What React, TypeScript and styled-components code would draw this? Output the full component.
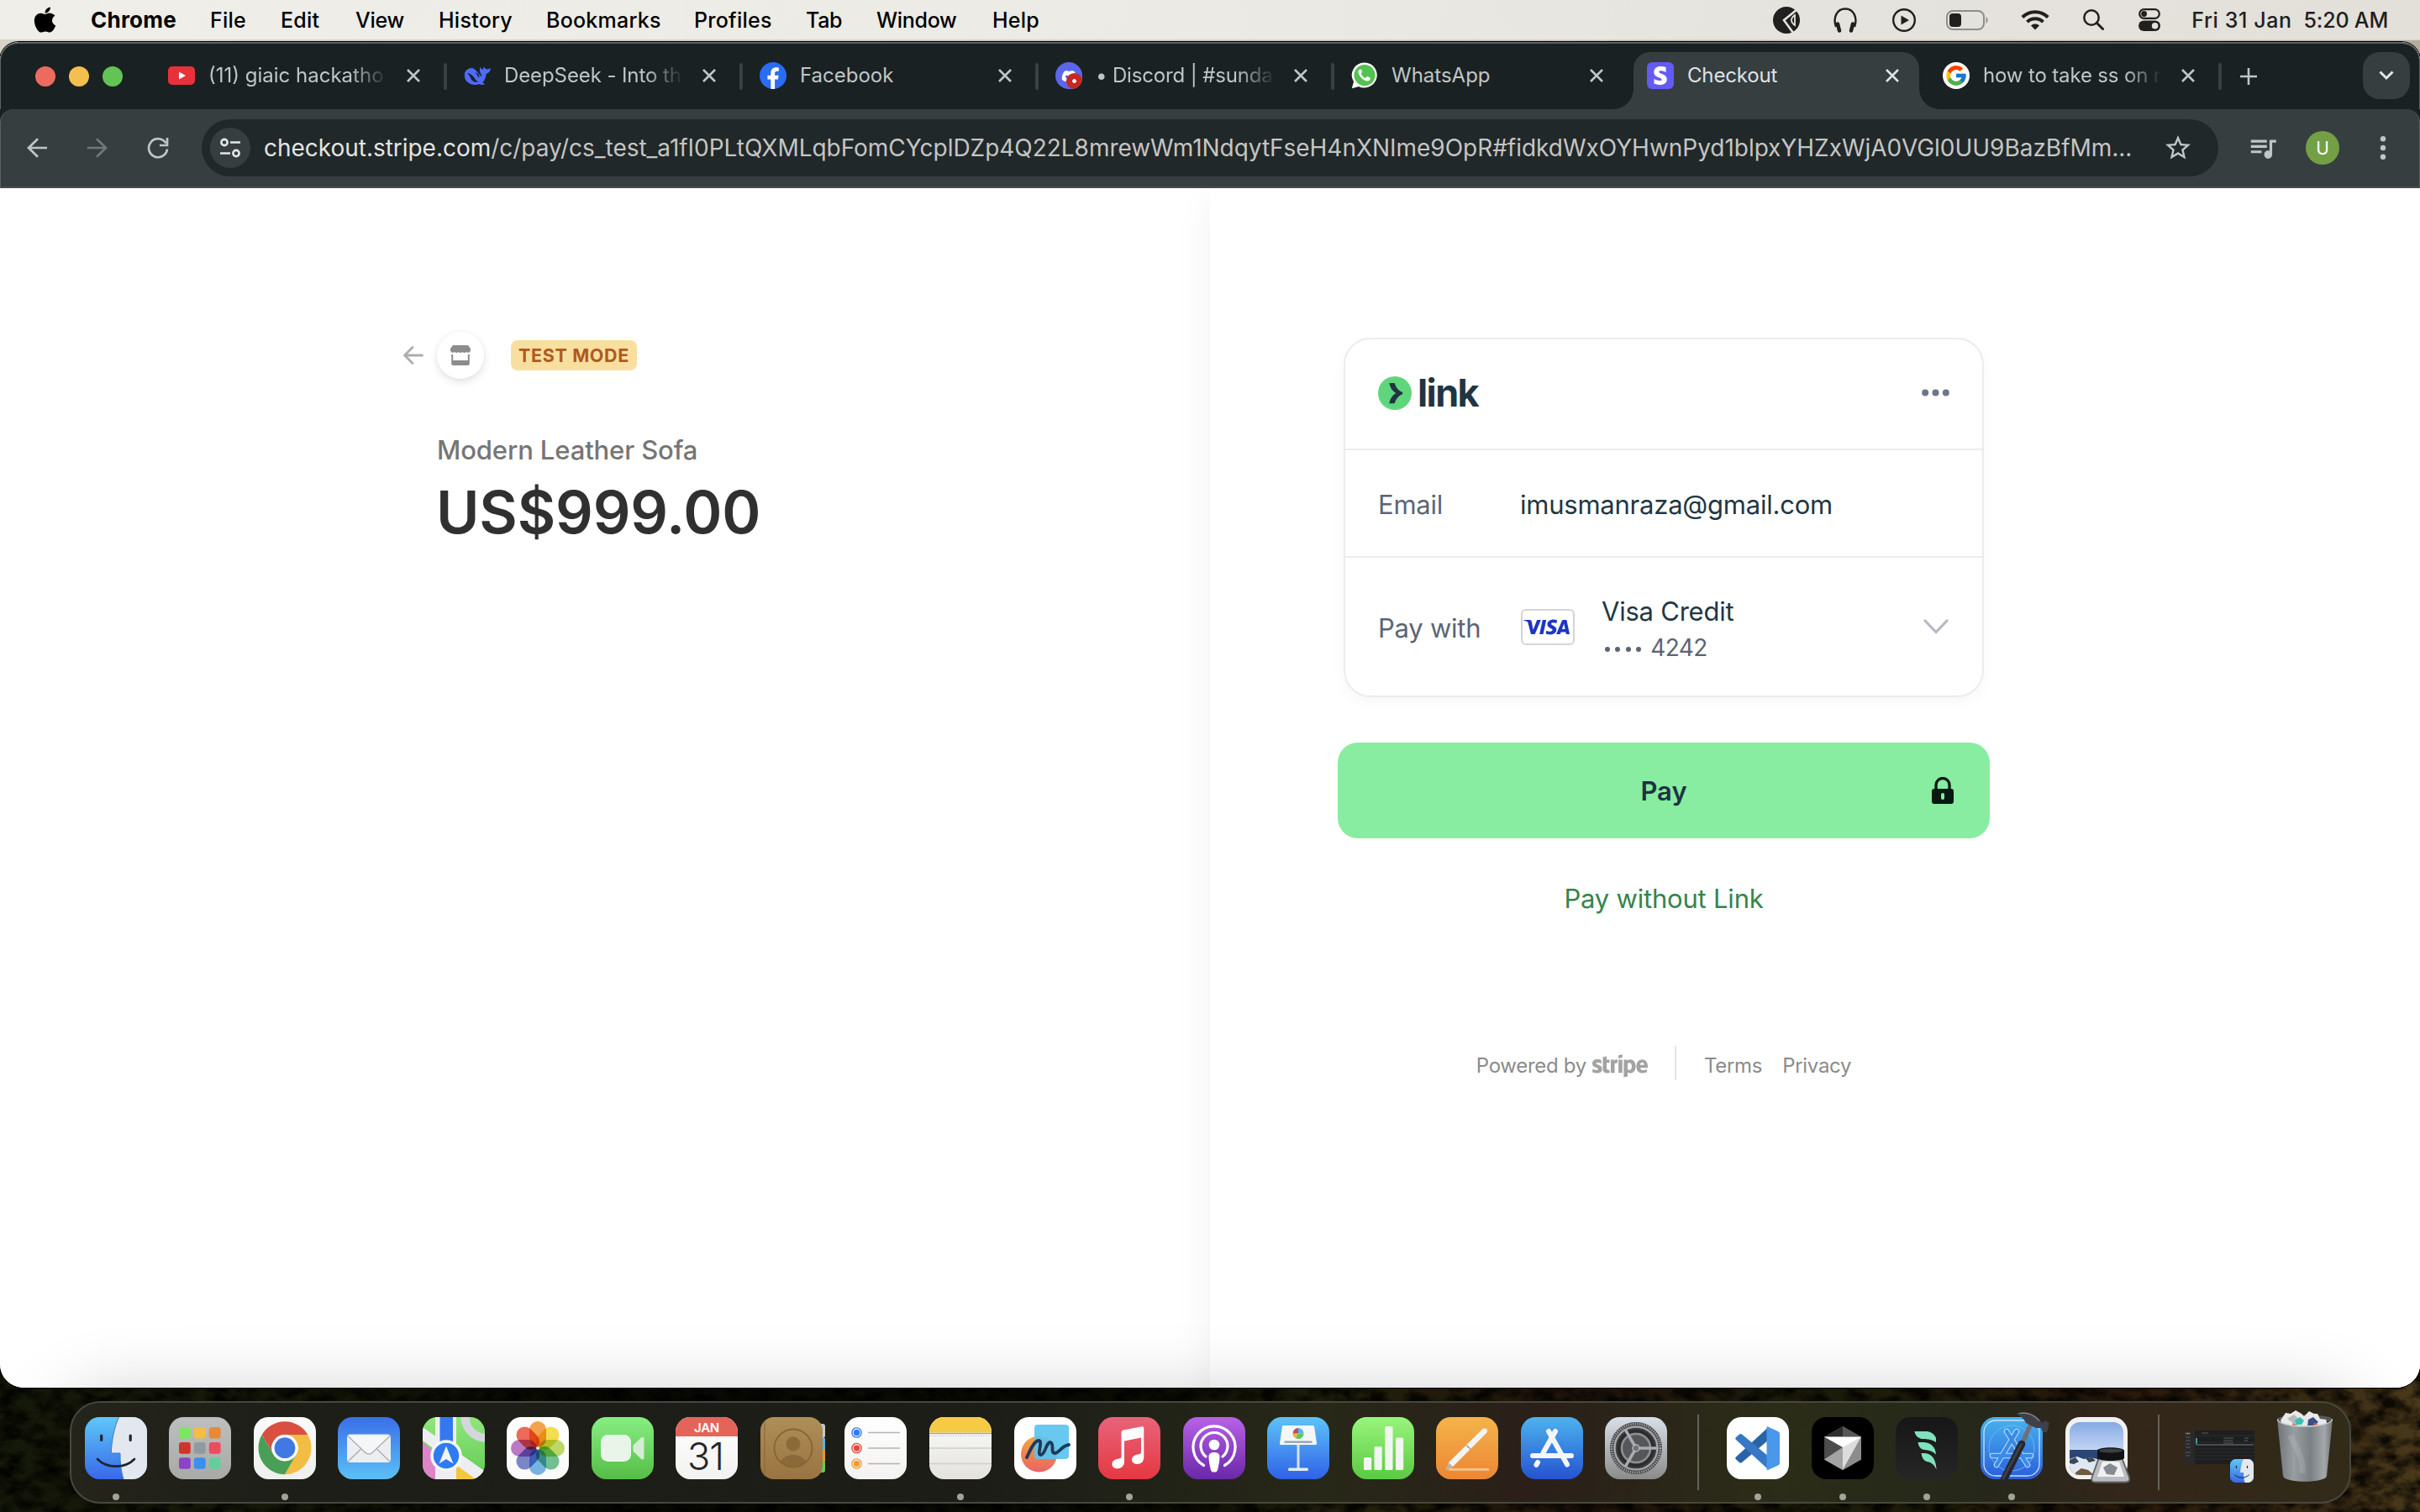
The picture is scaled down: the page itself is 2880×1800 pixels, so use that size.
import React from "react";
import styled, { createGlobalStyle, css } from "styled-components";
import { FaApple, FaDiscord, FaStripe, FaStripeS } from "react-icons/fa6";
import { FcGoogle } from "react-icons/fc";
import { SiVisa } from "react-icons/si";
import { MdQueueMusic, MdStarBorder } from "react-icons/md";

const GlobalStyle = createGlobalStyle`
  * { box-sizing: border-box; }
  body { margin: 0; background: #000; font-family: Inter, "Liberation Sans", sans-serif; }
  svg { display: block; flex: none; }
`;

/* ---------- desktop ---------- */

const Desktop = styled.div`
  position: relative;
  display: flex;
  flex-direction: column;
  width: 2880px;
  height: 1800px;
  overflow: hidden;
  background: linear-gradient(90deg, #d6d4c9, #b4ad9d) 0 0 / 100% 400px no-repeat, #080a04;
`;

const Wallpaper = styled.svg`
  position: absolute;
  left: 0;
  bottom: 0;
`;

/* ---------- menu bar ---------- */

const MenuBar = styled.header`
  position: relative;
  display: flex;
  justify-content: space-between;
  align-items: center;
  height: 48px;
  padding: 0 38px 0 38px;
  background: linear-gradient(90deg, #efeee9, #ebeae4 50%, #e5e3dd 75%, #e3e0da);
  border-bottom: 1px solid #d4d2ca;
  color: #000;
`;

const MenuGroup = styled.nav`
  display: grid;
  grid-template-columns: 70px 142px 84px 89px 99px 128px 176px 133px 84px 138px auto;
  align-items: center;
`;

const MenuItem = styled.span<{ $bold?: boolean; $tight?: boolean }>`
  font-size: ${(p) => (p.$bold ? 26 : 25)}px;
  font-weight: ${(p) => (p.$bold ? 700 : 450)};
  letter-spacing: ${(p) => (p.$tight ? -0.3 : 0.25)}px;
  line-height: 46px;
  white-space: nowrap;
`;

const StatusGroup = styled.div`
  display: flex;
  align-items: center;
  color: #21201e;
`;

const StatusIcon = styled.div<{ $w: number; $gap: number }>`
  display: flex;
  width: ${(p) => p.$w}px;
  margin-right: ${(p) => p.$gap}px;
`;

const Clock = styled.span`
  display: flex;
  gap: 14px;
  font-size: 25px;
  font-weight: 450;
  letter-spacing: 0.6px;
  line-height: 46px;
  white-space: nowrap;
`;

const ClockTime = styled.span`
  letter-spacing: -0.2px;
`;

/* ---------- browser window ---------- */

const BrowserWindow = styled.main`
  position: relative;
  display: flex;
  flex-direction: column;
  height: 1602px;
  margin-top: 2px;
  border-radius: 22px 22px 28px 28px;
  overflow: hidden;
  background: #fff;
  box-shadow: 0 0 0 1px #000;
`;

const TabStrip = styled.div`
  display: flex;
  height: 80px;
  padding-left: 41px;
  background: #1a2122;
  border: solid #5a6265;
  border-width: 2px 1px 0;
  border-radius: 22px 22px 0 0;
`;

const TrafficLights = styled.div`
  display: flex;
  align-items: center;
  gap: 16px;
  width: 136px;
`;

const Light = styled.i<{ $color: string }>`
  width: 24px;
  height: 24px;
  border-radius: 50%;
  background: ${(p) => p.$color};
`;

const TabSlot = styled.div<{ $divider?: boolean }>`
  position: relative;
  display: flex;
  align-items: flex-end;
  width: 352px;
  padding: 0 6px;
  ${(p) =>
    p.$divider &&
    css`
      &::after {
        content: "";
        position: absolute;
        right: -2px;
        top: 23px;
        width: 4px;
        height: 32px;
        border-radius: 2px;
        background: #394143;
      }
    `}
`;

const TabBody = styled.div<{ $active?: boolean }>`
  position: relative;
  display: flex;
  align-items: center;
  width: 340px;
  height: 68px;
  padding: 0 0 12px 16px;
  color: ${(p) => (p.$active ? "#dfe2e2" : "#c0c6c7")};
  ${(p) =>
    p.$active &&
    css`
      background: #363e40;
      border-radius: 20px 20px 0 0;
      &::before,
      &::after {
        content: "";
        position: absolute;
        bottom: 0;
        width: 24px;
        height: 24px;
      }
      &::before {
        left: -24px;
        background: radial-gradient(circle at 0 0, transparent 23.5px, #363e40 24px);
      }
      &::after {
        right: -24px;
        background: radial-gradient(circle at 100% 0, transparent 23.5px, #363e40 24px);
      }
    `}
`;

const Favicon = styled.div<{ $bg?: string; $radius?: string }>`
  position: relative;
  display: flex;
  flex: none;
  align-items: center;
  justify-content: center;
  width: 32px;
  height: 32px;
  border-radius: ${(p) => p.$radius || "0"};
  background: ${(p) => p.$bg || "transparent"};
  overflow: hidden;
  color: #fff;
`;

const FaviconAlert = styled.i`
  position: absolute;
  right: 0;
  bottom: 0;
  width: 19px;
  height: 19px;
  border-radius: 50%;
  background: radial-gradient(circle, #fff 2px, #c8281f 2.8px);
`;

const TabTitle = styled.span<{ $fade?: boolean; $ls?: number }>`
  width: 210px;
  margin-left: 16px;
  overflow: hidden;
  white-space: nowrap;
  font-size: 24px;
  line-height: 34px;
  letter-spacing: ${(p) => p.$ls || 0}px;
  ${(p) =>
    p.$fade &&
    css`
      mask-image: linear-gradient(90deg, #000 168px, transparent 214px);
    `}
`;

const TabClose = styled.div`
  margin-left: 25px;
`;

const NewTab = styled.div`
  display: flex;
  align-items: center;
  width: 170px;
  padding-left: 23px;
`;

const TabSearch = styled.div`
  display: flex;
  align-items: center;
  justify-content: center;
  width: 56px;
  height: 56px;
  margin-top: 10px;
  border-radius: 20px;
  background: #363e40;
`;

const ToolbarBack = styled.div`
  background: #1a2122;
`;

const Toolbar = styled.div`
  display: flex;
  align-items: center;
  height: 94px;
  padding-left: 31px;
  border: solid #5a6265;
  border-width: 0 1px;
  border-bottom: 2px solid #484a48;
  border-radius: 16px 16px 0 0;
  background: #363e40;
`;

const ToolbarIcon = styled.div<{ $w: number; $gap: number }>`
  display: flex;
  align-items: center;
  justify-content: center;
  width: ${(p) => p.$w}px;
  margin-right: ${(p) => p.$gap}px;
  color: #c0c6c7;
`;

const Omnibox = styled.div`
  display: flex;
  align-items: center;
  width: 2400px;
  height: 68px;
  margin-right: 36px;
  padding-left: 10px;
  border-radius: 34px;
  background: #212829;
`;

const SiteChip = styled.div`
  display: flex;
  align-items: center;
  justify-content: center;
  width: 48px;
  height: 48px;
  border-radius: 50%;
  background: #363e40;
`;

const Url = styled.span`
  width: 2247px;
  margin-left: 16px;
  font-size: 28px;
  line-height: 40px;
  letter-spacing: -0.03px;
  white-space: nowrap;
  color: #c5c5c4;
`;

const UrlHost = styled.span`
  color: #e4e4e3;
`;

const Avatar = styled.div`
  display: flex;
  align-items: center;
  justify-content: center;
  width: 40px;
  height: 40px;
  margin-right: 48px;
  border-radius: 50%;
  background: #739f45;
  color: #fff;
  font-size: 21px;
`;

/* ---------- checkout page ---------- */

const Page = styled.div`
  display: flex;
  flex: 1;
  background: #fff;
`;

const SummaryPane = styled.section`
  width: 1440px;
  padding: 171px 0 0 480px;
`;

const PaymentPane = styled.section`
  display: flex;
  flex-direction: column;
  width: 1440px;
  padding: 178px 512px 0 152px;
  background: #fff;
  box-shadow: -2px 14px 40px 0 rgba(0, 0, 0, 0.055);
  clip-path: inset(0 0 0 -60px);
`;

const MerchantRow = styled.div`
  display: flex;
  align-items: center;
  height: 56px;
`;

const StoreBadge = styled.div`
  display: flex;
  align-items: center;
  justify-content: center;
  width: 56px;
  height: 56px;
  margin: 0 32px 0 16px;
  border-radius: 50%;
  background: #fff;
  box-shadow: 0 4px 10px rgba(60, 66, 87, 0.14), 0 0 6px rgba(0, 0, 0, 0.03);
`;

const TestMode = styled.span`
  padding: 0 9px;
  border-radius: 8px;
  background: #f9df9f;
  color: #ae5a20;
  font-size: 21.5px;
  font-weight: 650;
  line-height: 36px;
  letter-spacing: 0.65px;
`;

const ProductName = styled.h2`
  margin: 65px 0 0 40px;
  font-size: 31px;
  font-weight: 500;
  line-height: 40px;
  letter-spacing: -0.12px;
  color: #757575;
`;

const Price = styled.h1`
  margin: 12px 0 0 39px;
  font-size: 70px;
  font-weight: 570;
  line-height: 84px;
  letter-spacing: -0.15px;
  color: #303030;
`;

const LinkCard = styled.div`
  margin: 0 7px;
  border: 2px solid #ececee;
  border-radius: 32px;
  box-shadow: 0 6px 16px rgba(0, 0, 0, 0.035);
`;

const CardRow = styled.div<{ $h: number; $shift?: number; $lift?: number }>`
  display: flex;
  align-items: center;
  height: ${(p) => p.$h}px;
  padding: ${(p) => p.$shift || 0}px 39px ${(p) => p.$lift || 0}px;
  & + & {
    border-top: 2px solid #ebecef;
  }
`;

const LinkWordmark = styled.span`
  flex: 1;
  margin-left: 7px;
  font-size: 45px;
  font-weight: 660;
  line-height: 50px;
  letter-spacing: -1.6px;
  color: #1f3544;
`;

const RowLabel = styled.span`
  width: 169px;
  font-size: 31px;
  line-height: 42px;
  letter-spacing: -0.25px;
  color: #5c6474;
`;

const RowValue = styled.span`
  font-size: 31px;
  line-height: 42px;
  letter-spacing: -0.23px;
  color: #223642;
`;

const VisaCard = styled.div`
  display: flex;
  align-items: center;
  justify-content: flex-start;
  width: 64px;
  height: 43px;
  margin: 0 32px 3px 1px;
  padding-left: 1px;
  border: 2px solid #d3d4d8;
  border-radius: 6px;
  color: #1f35c4;
`;

const CardDetails = styled.div`
  display: flex;
  flex: 1;
  flex-direction: column;
  padding-top: 4px;
`;

const CardNumber = styled.span`
  display: flex;
  align-items: center;
  gap: 11px;
  padding-left: 4px;
  font-size: 28px;
  line-height: 44px;
  letter-spacing: -0.6px;
  color: #5c6474;
`;

const MaskDots = styled.span`
  display: flex;
  gap: 6.4px;
  padding-top: 3px;
`;

const MaskDot = styled.i`
  width: 6px;
  height: 6px;
  border-radius: 50%;
  background: #5c6474;
`;

const ChevronSlot = styled.span`
  padding-bottom: 5px;
`;

const PayButton = styled.button`
  display: grid;
  grid-template-columns: 1fr auto 1fr;
  align-items: center;
  height: 114px;
  margin-top: 54px;
  padding: 0 43px;
  border: 0;
  border-radius: 24px;
  background: #88eda1;
  color: #1e3344;
  font: 600 31px / 42px Inter, sans-serif;
`;

const PayLabel = styled.span`
  grid-column: 2;
  padding-top: 2px;
`;

const LockSlot = styled.span`
  justify-self: end;
`;

const AltLink = styled.a`
  align-self: center;
  margin-top: 52px;
  font-size: 31px;
  line-height: 40px;
  letter-spacing: -0.2px;
  color: #35844b;
`;

const Footer = styled.footer`
  display: flex;
  align-items: center;
  align-self: center;
  height: 41px;
  margin-top: 155px;
  font-size: 24px;
  line-height: 30px;
  letter-spacing: -0.3px;
  color: #8b8b8b;
`;

const FooterBrand = styled.span`
  display: flex;
  align-items: center;
  gap: 7px;
  height: 41px;
  margin-right: 33px;
  padding: 6px 32px 0 0;
  border-right: 2px solid #e4e4e4;
`;

const FooterLink = styled.a`
  padding-top: 6px;
  & + & {
    margin-left: 24px;
  }
`;

/* ---------- dock ---------- */

const DockArea = styled.div`
  position: relative;
  display: flex;
  justify-content: center;
  padding-top: 16px;
`;

const Dock = styled.div`
  display: flex;
  width: 2715px;
  height: 122px;
  padding: 0 0 0 16px;
  border: 2px solid #46483e;
  border-radius: 36px;
  background: linear-gradient(90deg, #24241a, #1d1e18 10%, #1c1d17 40%, #272818 55%, #2a1f19 64%, #2b2d18 75%, #25271a 84%, #33261a 90%, #312b18);
  box-shadow: 0 0 90px rgba(0, 0, 0, 0.24);
`;

const DockItem = styled.div<{ $w?: number; $gap?: number; $top?: number; $running?: boolean }>`
  position: relative;
  width: ${(p) => p.$w || 74}px;
  height: 118px;
  padding-top: ${(p) => (p.$top === undefined ? 17 : p.$top)}px;
  margin-right: ${(p) => (p.$gap === undefined ? 26.55 : p.$gap)}px;
  ${(p) =>
    p.$running &&
    css`
      &::after {
        content: "";
        position: absolute;
        left: 33px;
        bottom: 2px;
        width: 8px;
        height: 8px;
        border-radius: 50%;
        background: #a3a497;
      }
    `}
`;

const DockDivider = styled.i<{ $gap: number }>`
  width: 2px;
  height: 90px;
  margin: 14px ${(p) => p.$gap}px 0 0;
  background: #63645a;
`;

/* ---------- small drawings ---------- */

const CloseGlyph = () => (
  <svg width="18" height="18" viewBox="0 0 18 18" stroke="currentColor" strokeWidth="2.6">
    <path d="M2 2l14 14M16 2L2 16" />
  </svg>
);

const DeepSeekGlyph = () => (
  <svg width="32" height="32" viewBox="0 0 32 32">
    <path
      fill="#4f6bfe"
      d="M.8 16C.8 10.500 4 7.500 9.500 7c1.800.4 3 1 4.200 2.200l3.200 3.200 3 3.600c1 1.400 1.600 1 1.300-.2l-1.900-3.800c-.6-1.700-.5-4 .5-6.500.5 1.800 1.400 2.900 2.800 3.600.2-1.500.6-2.700 1.400-3.700.9 1.900 2.100 2.800 4 3 1.400-.1 2.500-.6 3.600-1.500.3 3.600-1.500 6.200-5 6.900-.4 4.400-1.700 7.700-4.200 10.500.8.8 1.700 1.300 2.800 1.700-2.400 1.300-4.400 1.200-6.500 0C11 28.800.8 25 .8 16z"
    />
    <path fill="#1a2122" d="M4 12.800c3.800.6 7.200 3.400 9.200 7 .9 1.800 2.300 3 4 3.600-3.600 1.400-7-.6-8.600-3.700C7.400 17 6 14.800 4 12.800z" />
    <path fill="#1a2122" d="M13.500 12.600c2.600 0 4.600 1.700 5.100 4.400l-1.300 1.400c-.4-2.200-1.700-4.200-3.800-5.800z" />
  </svg>
);

const WhatsAppGlyph = () => (
  <svg width="32" height="32" viewBox="0 0 32 32">
    <path fill="#fff" d="M16 .5a15 15 0 1 1-7 28.400L.8 31.200 3 23.300A15 15 0 0 1 16 .5z" />
    <circle cx="16" cy="15.600" r="12.600" fill="#56c153" />
    <path
      fill="#fff"
      d="M11.300 8.500c-.5-.1-1.200 0-1.700.6-2.300 2.600-.7 6 2.300 9.300 3.300 3.600 7.600 5.200 9.800 3.400 1.300-1.100 1.300-2.500 1-2.900-.4-.5-2.900-1.700-3.600-1.800-.6 0-1.300 1.700-2 1.800-.9.100-4.600-3-5.300-5-.2-.8 1.300-1.500 1.300-2.300 0-.7-1-2.900-1.800-3.100z"
    />
  </svg>
);

const tabs = [
  {
    title: "(11) giaic hackathon",
    fade: true,
    divider: true,
    ls: 0,
    icon: (
      <Favicon>
        <svg width="32" height="22" viewBox="0 0 32 22">
          <rect width="32" height="22" rx="5" fill="#e8313d" />
          <path d="M13 6.500l8 4.500-8 4.500z" fill="#fff" />
        </svg>
      </Favicon>
    ),
  },
  { title: "DeepSeek - Into the U", fade: true, divider: true, ls: -0.1, icon: <Favicon><DeepSeekGlyph /></Favicon> },
  {
    title: "Facebook",
    divider: true,
    ls: 0,
    icon: (
      <Favicon $bg="#2a6cf4" $radius="50%">
        <svg width="32" height="32" viewBox="0 0 32 32">
          <path fill="#fff" d="M13.300 32V20.500H9.400v-4.700h3.900v-2.400c0-5 2.500-7.100 6.600-7.100 1.300 0 2.100.1 2.900.3v4.200h-2c-2 0-2.700.9-2.700 2.900v2.100h4.600l-.9 4.700h-3.700V32z" />
        </svg>
      </Favicon>
    ),
  },
  {
    title: "• Discord | #sunday",
    fade: true,
    divider: true,
    ls: -0.15,
    icon: (
      <Favicon $bg="#5b66ea" $radius="50% 50% 40% 50%">
        <FaDiscord size={19} />
        <FaviconAlert />
      </Favicon>
    ),
  },
  { title: "WhatsApp", ls: 0, icon: <Favicon><WhatsAppGlyph /></Favicon> },
  {
    title: "Checkout",
    active: true,
    ls: -0.16,
    icon: <Favicon $bg="#635bf4" $radius="6px"><FaStripeS size={22} /></Favicon>,
  },
  {
    title: "how to take ss on mac",
    fade: true,
    divider: true,
    ls: -0.15,
    icon: <Favicon $bg="#fff" $radius="50%"><FcGoogle size={28} /></Favicon>,
  },
];

/* ---------- dock icons, each on a 74 x 74 tile ---------- */

type TileProps = { id: string; from: string; to: string; children?: React.ReactNode };

const Tile = ({ id, from, to, children }: TileProps) => (
  <svg width="74" height="74" viewBox="0 0 74 74">
    <defs>
      <linearGradient id={id} x2="0" y2="1">
        <stop stopColor={from} />
        <stop offset="1" stopColor={to} />
      </linearGradient>
      <clipPath id={id + "-clip"}>
        <rect width="74" height="74" rx="17.500" />
      </clipPath>
    </defs>
    <g clipPath={`url(#${id}-clip)`}>
      <rect width="74" height="74" fill={`url(#${id})`} />
      {children}
    </g>
  </svg>
);

const FinderFace = ({ id }: { id: string }) => (
  <Tile id={id} from="#5ec8f8" to="#3868ea">
    <path d="M40.500 0C35 12 32 27 31.200 43H42c-.3 11 1 22 4 31h28V0z" fill="#e3e8f0" />
    <path d="M40.500 0C35 12 32 27 31.200 43H42c-.3 11 1 22 4 31" fill="none" stroke="#3a78c8" strokeWidth="1" />
    <path d="M19.700 22v5.500M54.200 22v5.500" stroke="#1c2530" strokeWidth="3.200" strokeLinecap="round" />
    <path d="M15 50c11 11.500 33 11.500 44 0" fill="none" stroke="#1c2530" strokeWidth="2.600" strokeLinecap="round" />
  </Tile>
);

const launchColors = ["#7ae85e", "#f5bd45", "#e88a33", "#cf3527", "#909a9f", "#ef4b5e", "#8b43c9", "#3a90ef", "#62cf9c"];

const Launchpad = () => (
  <Tile id="launchpad" from="#bdbfbf" to="#a8aaa8">
    {launchColors.map((c, i) => (
      <rect key={c} x={12 + (i % 3) * 17.9} y={12 + Math.floor(i / 3) * 18.1} width="13.800" height="13.600" rx="3" fill={c} />
    ))}
  </Tile>
);

const ChromeIcon = () => (
  <Tile id="chrome" from="#fafafa" to="#efefed">
    <g transform="translate(37 36.700)">
      <path d="M-27.300-15.700A31.500 31.500 0 0 1 27.300-15.700L0-15.700A15.700 15.700 0 0 0-13.600 7.850Z" fill="#d95040" />
      <path d="M27.300-15.700A31.500 31.500 0 0 1 0 31.500L13.600 7.850A15.700 15.700 0 0 0 0-15.700Z" fill="#f2bd42" />
      <path d="M0 31.500A31.500 31.500 0 0 1-27.300-15.700L-13.600 7.850A15.700 15.700 0 0 0 13.600 7.850Z" fill="#4a9f57" />
      <circle r="15.600" fill="#fff" />
      <circle r="12.400" fill="#4079e2" />
    </g>
  </Tile>
);

const MailIcon = () => (
  <Tile id="mail" from="#3a6fe9" to="#5cc0f6">
    <rect x="11" y="20.500" width="52" height="33.500" rx="4" fill="#eceef0" />
    <path d="M12.500 52.500L27.500 38M61.500 52.500L46.500 38" stroke="#a9adb2" strokeWidth="1.300" />
    <path d="M12 22.500L32.500 42c2.800 2.600 6.200 2.600 9 0L62 22.500" fill="#f6f6f6" stroke="#a9adb2" strokeWidth="1.300" />
  </Tile>
);

const MapsIcon = () => (
  <Tile id="maps" from="#90e67c" to="#62cb55">
    <path d="M-2 28L26 52V76H-2z" fill="#dd84c8" />
    <path d="M40 76V52L76 80z" fill="#f3c73f" />
    <path d="M0 12L76 66V76H66L0 28z" fill="#eeeef2" />
    <rect x="15" y="-2" width="25" height="78" fill="#eeeef2" />
    <rect x="20.500" y="-2" width="15.500" height="40" fill="#3478f0" />
    <path d="M50-4c0 17 10 29 28 29" fill="none" stroke="#d5d6dc" strokeWidth="10" />
    <circle cx="28" cy="46" r="18.800" fill="#f4f6fa" />
    <circle cx="28" cy="46" r="15.200" fill="#2f7bf2" />
    <path d="M28 34.500L36.500 55.500 28 50 19.500 55.500z" fill="#f3f3f3" />
  </Tile>
);

const petals = ["#f39a38", "#f2dc3c", "#b6d757", "#62bd88", "#68aee4", "#6f7bc5", "#b56dc0", "#ee5a48"];

const Petal = styled.rect`
  mix-blend-mode: multiply;
`;

const PhotosIcon = () => (
  <Tile id="photos" from="#ffffff" to="#fafafa">
    <g transform="translate(37 37)">
      {petals.map((c, i) => (
        <Petal
          key={c}
          x="-10"
          y="-32"
          width="20"
          height="31"
          rx="10"
          fill={c}
          opacity="0.9"
          transform={`rotate(${i * 45})`}
        />
      ))}
      <circle r="1.800" fill="#fff" />
    </g>
  </Tile>
);

const FaceTimeIcon = () => (
  <Tile id="facetime" from="#87ee82" to="#55bd46">
    <rect x="11" y="21" width="36" height="32" rx="8.500" fill="#eaf5ea" />
    <path d="M49.500 33.500L59 24.500c1.500-1.300 3.500-.8 3.500 1.300v22.600c0 2.100-2 2.600-3.500 1.300l-9.500-9z" fill="#d3eed3" />
  </Tile>
);

const CalendarIcon = () => (
  <Tile id="calendar" from="#ffffff" to="#f2f2f1">
    <rect width="74" height="23" fill="#e4645a" />
    <text x="37" y="18" textAnchor="middle" fontFamily="Inter" fontWeight="600" fontSize="15" letterSpacing="-0.300" fill="#fff">JAN</text>
    <text x="35.500" y="63" textAnchor="middle" fontFamily="Inter" fontWeight="300" fontSize="45" letterSpacing="-1" fill="#252525">31</text>
  </Tile>
);

const ContactsIcon = () => (
  <svg width="78" height="74" viewBox="0 0 78 74">
    <rect x="58" y="8" width="19" height="17" rx="3" fill="#c8c8c8" />
    <rect x="58" y="25" width="19" height="15" fill="#5ab4ea" />
    <rect x="58" y="39" width="19" height="14" fill="#ee9434" />
    <rect x="58" y="52" width="19" height="14" rx="3" fill="#62ce58" />
    <defs>
      <linearGradient id="leather" x2="0" y2="1">
        <stop stopColor="#ae8f58" />
        <stop offset="1" stopColor="#9a7341" />
      </linearGradient>
      <clipPath id="contact-clip"><circle cx="39" cy="37" r="22.500" /></clipPath>
    </defs>
    <rect width="74" height="74" rx="16" fill="url(#leather)" />
    <path d="M5 4v66" stroke="#8a6b3c" strokeWidth="1.200" />
    <g clipPath="url(#contact-clip)" fill="#8b6939">
      <circle cx="39" cy="32" r="8.500" />
      <ellipse cx="39" cy="61" rx="18" ry="16" />
    </g>
    <circle cx="39" cy="37" r="22.500" fill="none" stroke="#866534" strokeWidth="1.800" />
  </svg>
);

const RemindersIcon = () => (
  <Tile id="reminders" from="#ffffff" to="#f3f2f0">
    {["#3478f6", "#e5493a", "#ee9b33"].map((c, i) => (
      <g key={c} transform={`translate(0 ${18.5 + i * 18.5})`}>
        <circle cx="14.500" r="5.600" fill="none" stroke={c} strokeWidth="1.400" />
        <circle cx="14.500" r="3.800" fill={c} />
        <path d="M28 0h38" stroke="#b4b4b7" strokeWidth="1.400" />
      </g>
    ))}
  </Tile>
);

const NotesIcon = () => (
  <Tile id="notes" from="#fcfcfc" to="#e3e2dd">
    <rect width="74" height="18.500" fill="#f6ca45" />
    <path d="M0 19.500h74" stroke="#aaa7a0" strokeWidth="1.500" />
    <path d="M1 22.500h72" stroke="#bdbab3" strokeWidth="1.200" strokeDasharray="1.200 1.800" />
    <path d="M0 37h74M0 55.500h74" stroke="#cfcec9" strokeWidth="1.400" />
  </Tile>
);

const FreeformIcon = () => (
  <Tile id="freeform" from="#ffffff" to="#ffffff">
    <defs>
      <linearGradient id="blob" x2="0" y2="1">
        <stop stopColor="#f2a63d" />
        <stop offset="1" stopColor="#ea6464" />
      </linearGradient>
    </defs>
    <circle cx="29.500" cy="44" r="21.500" fill="url(#blob)" />
    <rect x="24" y="9" width="41" height="41" rx="4" fill="#5bc4ef" opacity="0.920" />
    <path d="M15 48c4-9 9-20 14-20 6 0-3 18 3 17 5-1 6-15 11-15 5 1 0 13 5 13 6 0 8-9 17-10" fill="none" stroke="#1d3a5c" strokeWidth="3.800" strokeLinecap="round" />
  </Tile>
);

const MusicIcon = () => (
  <Tile id="music" from="#e9637a" to="#e53841">
    <path
      fill="#fff"
      d="M27.500 18.500c0-1.600.8-2.500 2.200-2.900l22-4.300c1.700-.3 2.600.5 2.600 2V48c0 5-3.500 8-8 8-3.800 0-6.300-2.300-6.300-5.200 0-3.300 2.300-5.300 6-6.100l3-.6c1.500-.4 2-1 2-2.300V24.500l-20 4V53c0 5-3.500 8.300-8.200 8.300-3.800 0-6.400-2.300-6.400-5.300s2.400-5.200 6.100-6l3-.7c1.500-.4 2-1 2-2.300z"
    />
  </Tile>
);

const PodcastsIcon = () => (
  <Tile id="podcasts" from="#b762e8" to="#6a28a8">
    <g fill="none" stroke="#fff" strokeLinecap="round">
      <path d="M24.500 57.500a25 25 0 1 1 25 0" strokeWidth="3.200" />
      <path d="M27 47a16 16 0 1 1 20 0" strokeWidth="3.200" />
    </g>
    <circle cx="37" cy="33" r="6.300" fill="#fff" />
    <path d="M30.500 47c0-3.600 2.700-5 6.500-5s6.500 1.400 6.500 5c0 5-1.500 12-2.300 15.500-.6 2.600-2 3-4.200 3s-3.600-.4-4.200-3C32 59 30.500 52 30.500 47z" fill="#fff" />
  </Tile>
);

const KeynoteIcon = () => (
  <Tile id="keynote" from="#5dc3f8" to="#2f62e8">
    <path d="M37 33v29" stroke="#d8e3ee" strokeWidth="3" />
    <rect x="25" y="60.500" width="24" height="3.500" rx="1.500" fill="#e6eaf0" />
    <path d="M20 10h34c1.500 0 2 .6 2.200 2L59 31c.2 1.300-.5 2-2 2H17c-1.500 0-2.200-.7-2-2l2.800-19c.2-1.400.7-2 2.200-2z" fill="#f5f6f7" />
    <path d="M20.500 28.500h33v2.200h-33z" fill="#8ba0b2" />
    <path d="M37 19.500V13a6.500 6.500 0 0 1 6.500 6.500z" fill="#4fb6ec" />
    <path d="M37 19.500h6.500a6.500 6.500 0 0 1-9.800 5.600z" fill="#5ec75a" />
    <path d="M37 19.500l-3.300 5.600a6.500 6.500 0 0 1-3.200-5.600z" fill="#f0b03f" />
    <path d="M37 19.500h-6.500A6.500 6.500 0 0 1 37 13z" fill="#c4466b" />
  </Tile>
);

const NumbersIcon = () => (
  <Tile id="numbers" from="#98f57c" to="#5bc943">
    {[[14, 48], [26.5, 35], [39.3, 11], [52, 24.5]].map(([x, y]) => (
      <rect key={x} x={x} y={y} width="9.200" height={63 - y} rx="1.500" fill="#f1f7ef" />
    ))}
  </Tile>
);

const PagesIcon = () => (
  <Tile id="pages" from="#f4b44a" to="#ec8634">
    <rect x="15" y="61" width="48" height="2.800" rx="1" fill="#f7c48d" />
    <path d="M12 63l3-9L55 14.500c2-1.800 6-1.200 6 1.500 0 1.600-.8 2.700-2 4L20 59z" fill="#f4f4f4" />
    <path d="M12 63l3-9 5 5z" fill="#b9b2a8" />
    <path d="M36 33.500l5 4.500" stroke="#9a9a9a" strokeWidth="1.500" />
  </Tile>
);

const AppStoreIcon = () => (
  <Tile id="appstore" from="#4db3ee" to="#2553d0">
    <g stroke="#f3f7fc" strokeWidth="6" strokeLinecap="round">
      <path d="M14 46h46" />
      <path d="M33 17L55 56.500" />
      <path d="M41 17L26.500 42.500M20 54l-1.600 2.800" />
    </g>
  </Tile>
);

const SettingsIcon = () => (
  <Tile id="settings" from="#d8e0e8" to="#8b8b89">
    <g transform="translate(37 37)" fill="none">
      <circle r="31" fill="#3b3c3d" />
      <circle r="29" stroke="#9ea1a3" strokeWidth="3" strokeDasharray="1.500 1.200" />
      <circle r="25.500" stroke="#a3a6a8" strokeWidth="2.500" />
      <circle r="17" fill="#55575a" stroke="#8e9193" strokeWidth="2.500" />
      <circle r="20.500" stroke="#2b2c2d" strokeWidth="3" />
      <path d="M0 0h25M0 0L-12.500-21.600M0 0L-12.500 21.600" stroke="#a9acae" strokeWidth="3.500" />
      <circle r="4" fill="#707375" stroke="#b5b8ba" strokeWidth="1.500" />
    </g>
  </Tile>
);

const VSCodeIcon = () => (
  <Tile id="vscode" from="#ffffff" to="#ffffff">
    <path d="M50 11.500L11 47.500c-1 1-1 2.200 0 3l4 3.500c1 .8 2 .8 3 0L50 27z" fill="#2a64a8" />
    <path d="M50 63L11 27c-1-1-1-2.200 0-3l4-3.500c1-.8 2-.8 3 0L50 47z" fill="#3778c6" />
    <path d="M49 11.500l12 5.500c1.300.7 2 1.500 2 3v34.500c0 1.500-.7 2.300-2 3L49 63c-1 .4-1.500 0-1.500-1V12.500c0-1 .5-1.400 1.500-1z" fill="#4a98ea" />
  </Tile>
);

const CursorIcon = () => (
  <Tile id="cursor" from="#000000" to="#000000">
    <path d="M37 11L15 23.500V50.500L37 63 59 50.500V23.500z" fill="#6b6b6b" />
    <path d="M37 11L15 23.500h44z" fill="#2e2e2e" />
    <path d="M37 11v12.500h22z" fill="#575757" />
    <path d="M15 23.500V50.500L37 36z" fill="#4c4c4c" />
    <path d="M15 50.500L37 63V36z" fill="#a3a3a3" />
    <path d="M15 23.500h44L37 63V36z" fill="#fff" />
    <path d="M59 23.500L37 63V36z" fill="#dcdcdc" />
    <path d="M59 23.500v27L37 63z" fill="#8c8c8c" />
  </Tile>
);

const LeafIcon = () => (
  <Tile id="leaf" from="#161616" to="#262626">
    <g fill="#7fe3bd">
      <path d="M22.500 17h12c7 0 13 4 13.500 11.500-5-3.500-10-4.300-17-4.500-4.500-.2-7.500-2.500-8.500-7z" />
      <path d="M22.500 17c1 5 4 8.500 9.500 9 6 .4 11 .5 16 4v-5C46 19.500 41 17 34.500 17z" />
      <path d="M26.500 30H33c8 0 14.500 5 15 14.500-4-3.800-8-5-13.500-5.500-4.500-.4-7.300-3.700-8-9z" />
      <path d="M30.500 43H35c7.500.6 13 6.500 13.500 19.500-3-6.500-6.500-8.500-10.500-9.200-4.500-.8-6.800-5-7.500-10.300z" />
    </g>
  </Tile>
);

const XcodeIcon = () => (
  <svg width="84" height="88" viewBox="0 -7 84 88">
    <defs>
      <linearGradient id="xcode" x2="0" y2="1">
        <stop stopColor="#46b4ee" />
        <stop offset="1" stopColor="#2c5ddb" />
      </linearGradient>
    </defs>
    <rect width="74" height="74" rx="17.500" fill="url(#xcode)" />
    <rect x="4" y="4" width="66" height="66" rx="14" fill="none" stroke="#c6e4fb" strokeWidth="1.300" />
    <circle cx="37" cy="37" r="27" fill="none" stroke="#7db9f0" strokeWidth="0.800" />
    <g stroke="#bfe0fb" strokeWidth="6.500" strokeLinecap="round">
      <path d="M14 46h46M31 17L56 57M43 17L19 57" />
    </g>
    <g stroke="#3a8be6" strokeWidth="4.500" strokeLinecap="round">
      <path d="M14 46h46M31 17L56 57M43 17L19 57" />
    </g>
    <path d="M60 8L49 33" stroke="#6d7078" strokeWidth="5.500" />
    <path d="M49 32L28 74" stroke="#24262c" strokeWidth="8.500" strokeLinecap="round" />
    <path d="M48.500 32L27 73" stroke="#3d4048" strokeWidth="3" strokeLinecap="round" />
    <path d="M42-4c10-4 22-1 29 8l3 3 3-3 5 3-3 11-5 0-2-5-6 0-12-6C52 3 49-1 42-4z" fill="#3e4149" />
    <path d="M46-4.500c9-1.500 18 2 24 9" fill="none" stroke="#8b8e96" strokeWidth="1.200" />
  </svg>
);

const PreviewIcon = () => (
  <svg width="80" height="80" viewBox="0 0 80 80">
    <defs>
      <clipPath id="photo"><rect x="5" y="6" width="64" height="63" rx="12" /></clipPath>
      <linearGradient id="sky" x2="0" y2="1">
        <stop stopColor="#86a9e4" />
        <stop offset="1" stopColor="#c3d7f4" />
      </linearGradient>
    </defs>
    <rect width="74" height="74" rx="17.500" fill="#f3f1f0" />
    <g clipPath="url(#photo)">
      <rect x="5" y="6" width="64" height="34" fill="url(#sky)" />
      <rect x="5" y="39" width="64" height="32" fill="#2b4674" />
      <path d="M5 50l9-3 8 3 9-2 12 4 26-3v22H5z" fill="#dfe8f0" />
      <path d="M5 51l7-3 4 5-6 3-5-1zM24 49l8-1 4 4-8 2z" fill="#3b4658" />
      <path d="M12 66l7-5 8 2 7 6H12z" fill="#6f5a42" />
    </g>
    <path d="M40 48h27l9 24c1 4-1 5.500-5 5.500H36c-4 0-5.500-1.500-4.500-5.500z" fill="#b9bdc0" stroke="#5f6366" strokeWidth="1.800" />
    <path d="M44 53h20l6 18H38z" fill="#f0f1f2" />
    <path d="M45 60l8-5 9 5-4 9-9-1z" fill="#858b91" />
    <path d="M38 40c0-5 31-5 32 0v9c-2 4-30 4-32 0z" fill="#111214" />
    <ellipse cx="54" cy="40" rx="14" ry="2.500" fill="#3c3e41" />
  </svg>
);

const MinimizedWindow = () => (
  <svg width="84" height="62" viewBox="0 0 84 62">
    <rect width="84" height="40" rx="1" fill="#1d1e1f" />
    <rect width="13" height="40" fill="#29292a" />
    <circle cx="2.500" cy="3.500" r="1" fill="#c6473f" />
    <circle cx="4.500" cy="3.500" r="1" fill="#c8973a" />
    <circle cx="6.500" cy="3.500" r="1" fill="#4da245" />
    <path d="M13 6h71M13 14h71M13 22h71M13 26h71M13 30h71M13 34h71" stroke="#2c2d2e" strokeWidth="1" />
    <path d="M14 17h69" stroke="#4b4c4d" strokeWidth="2" />
    <path d="M15 9v7" stroke="#4d9ac4" strokeWidth="1.800" />
    <path d="M21 3h8M47 9h12M47 12h11M72 9h5M72 12h4M47 15h12M2 8h6M2 12h6M2 16h5M2 20h6M2 26h6M2 30h5" stroke="#5c5d5e" strokeWidth="1" />
    <svg x="55" y="34" width="28" height="28" viewBox="0 0 74 74"><FinderFace id="finder-mini" /></svg>
  </svg>
);

const TrashIcon = () => (
  <svg width="66" height="86" viewBox="0 0 66 86">
    <defs>
      <linearGradient id="can">
        <stop stopColor="#70757a" />
        <stop offset="0.300" stopColor="#989da1" />
        <stop offset="0.600" stopColor="#7b8085" />
        <stop offset="0.850" stopColor="#a4a8ab" />
        <stop offset="1" stopColor="#6b7074" />
      </linearGradient>
    </defs>
    <path d="M1 10c0-6 64-6 64 0v3H1z" fill="#55595c" />
    <path d="M4 12l6-9 6 1 6-4 7 4 3 3 6-6 6 3 4 0 3 6 7 1 2 6-5 8H9z" fill="#e9e9e9" />
    <path d="M12 10l8-5 8 7-5 6z" fill="#b4b9bd" />
    <path d="M21 12l6-4 5 4-3 5h-6z" fill="#36c0b4" />
    <path d="M18 15l6 3-5 2z" fill="#df5b3b" />
    <path d="M37 11l6-3 6 6-8 6-5-1z" fill="#3b4f86" />
    <path d="M43 15l6 1-5 3z" fill="#d95836" />
    <path d="M0 10c2 12 64 12 66 0l-7 68c-1 9-51 9-52 0z" fill="url(#can)" />
    <path d="M0 10c2 12 64 12 66 0" fill="none" stroke="#c9cccf" strokeWidth="1.300" />
    <path d="M16 30c3 12 16 22 14 45" fill="none" stroke="#fff" strokeOpacity="0.120" strokeWidth="7" />
  </svg>
);

export default function App() {
  return (
    <Desktop>
      <GlobalStyle />
      <Wallpaper width="2880" height="170" viewBox="0 0 2880 170">
        <defs>
          <linearGradient id="ground">
            <stop stopColor="#161a0a" />
            <stop offset="0.100" stopColor="#191b0a" />
            <stop offset="0.250" stopColor="#090b04" />
            <stop offset="0.480" stopColor="#0e0e05" />
            <stop offset="0.560" stopColor="#26240d" />
            <stop offset="0.650" stopColor="#25160c" />
            <stop offset="0.760" stopColor="#1f200a" />
            <stop offset="0.880" stopColor="#2c1b0c" />
            <stop offset="1" stopColor="#4a3a1b" />
          </linearGradient>
          <filter id="foliage" x="0" y="0" width="100%" height="100%">
            <feTurbulence type="fractalNoise" baseFrequency="0.040 0.060" numOctaves="4" seed="7" />
            <feColorMatrix values="0 0 0 0 0  0 0 0 0 0  0 0 0 0 0  2.600 0 0 0 -0.900" />
          </filter>
        </defs>
        <rect width="2880" height="170" fill="url(#ground)" />
        <rect width="2880" height="170" filter="url(#foliage)" opacity="0.800" />
      </Wallpaper>

      <MenuBar>
        <MenuGroup>
          <FaApple size={31} viewBox="0 26 384 460" />
          <MenuItem $bold>Chrome</MenuItem>
          <MenuItem>File</MenuItem>
          <MenuItem>Edit</MenuItem>
          <MenuItem $tight>View</MenuItem>
          <MenuItem>History</MenuItem>
          <MenuItem>Bookmarks</MenuItem>
          <MenuItem>Profiles</MenuItem>
          <MenuItem $tight>Tab</MenuItem>
          <MenuItem $tight>Window</MenuItem>
          <MenuItem>Help</MenuItem>
        </MenuGroup>
        <StatusGroup>
          <StatusIcon $w={32} $gap={40}>
            <svg width="32" height="32" viewBox="0 0 32 32">
              <circle cx="16" cy="16" r="16" fill="currentColor" />
              <path d="M29 3L13 16l11 15" fill="none" stroke="#e5e3dd" strokeWidth="2.600" />
              <path d="M26 10v12c-3-2-4-4-4-6s1-4 4-6z" fill="none" stroke="#e5e3dd" strokeWidth="1.800" />
            </svg>
          </StatusIcon>
          <StatusIcon $w={28} $gap={42}>
            <svg width="28" height="30" viewBox="0 0 28 30" fill="none" stroke="currentColor">
              <path d="M3 23C-1 12 4 1.500 14 1.500S29 12 25 23" strokeWidth="2.400" />
              <path d="M5 19.500l2 8M23 19.500l-2 8" strokeWidth="4.500" strokeLinecap="round" />
            </svg>
          </StatusIcon>
          <StatusIcon $w={28} $gap={36}>
            <svg width="28" height="28" viewBox="0 0 28 28">
              <circle cx="14" cy="14" r="12.800" fill="none" stroke="currentColor" strokeWidth="2.400" />
              <path d="M10.500 8.500v11l9.500-5.500z" fill="currentColor" />
            </svg>
          </StatusIcon>
          <StatusIcon $w={51} $gap={38}>
            <svg width="51" height="24" viewBox="0 0 51 24">
              <rect x="1" y="1" width="44" height="22" rx="7" fill="none" stroke="#8f8e89" strokeWidth="2" />
              <rect x="4" y="4" width="14" height="16" rx="4" fill="currentColor" />
              <path d="M47.500 8c2.600 1 2.600 7 0 8z" fill="#8f8e89" />
            </svg>
          </StatusIcon>
          <StatusIcon $w={34} $gap={40}>
            <svg width="34" height="25" viewBox="0 0 34 25" fill="none" stroke="currentColor" strokeWidth="4">
              <path d="M1.800 9.500a21.500 21.500 0 0 1 30.400 0" />
              <path d="M7.500 15.200a13.500 13.500 0 0 1 19 0" />
              <path d="M17 24.500l-5-5c2.800-2.600 7.200-2.600 10 0z" fill="currentColor" stroke="none" />
            </svg>
          </StatusIcon>
          <StatusIcon $w={25} $gap={41}>
            <svg width="25" height="25" viewBox="0 0 25 25" fill="none" stroke="currentColor" strokeWidth="2.500" strokeLinecap="round">
              <circle cx="10" cy="10" r="8.700" />
              <path d="M16.500 16.500l7 7" strokeWidth="3" />
            </svg>
          </StatusIcon>
          <StatusIcon $w={26} $gap={37}>
            <svg width="26" height="27" viewBox="0 0 26 27">
              <rect x="1.200" y="1.200" width="23.600" height="10.600" rx="5.300" fill="none" stroke="currentColor" strokeWidth="2.200" />
              <circle cx="6.600" cy="6.500" r="3.400" fill="currentColor" />
              <rect y="14.500" width="26" height="12.500" rx="6.250" fill="currentColor" />
              <circle cx="19.600" cy="20.700" r="3.800" fill="#e3e1db" />
            </svg>
          </StatusIcon>
          <Clock>
            <span>Fri 31 Jan</span>
            <ClockTime>5:20 AM</ClockTime>
          </Clock>
        </StatusGroup>
      </MenuBar>

      <BrowserWindow>
        <TabStrip>
          <TrafficLights>
            <Light $color="#ec6b5f" />
            <Light $color="#f4bf4f" />
            <Light $color="#61c455" />
          </TrafficLights>
          {tabs.map((tab) => (
            <TabSlot key={tab.title} $divider={tab.divider}>
              <TabBody $active={tab.active}>
                {tab.icon}
                <TabTitle $fade={tab.fade} $ls={tab.ls}>{tab.title}</TabTitle>
                <TabClose><CloseGlyph /></TabClose>
              </TabBody>
            </TabSlot>
          ))}
          <NewTab>
            <svg width="22" height="22" viewBox="0 0 22 22" stroke="#c0c6c7" strokeWidth="2.600">
              <path d="M11 1v20M1 11h20" />
            </svg>
          </NewTab>
          <TabSearch>
            <svg width="18" height="12" viewBox="0 0 18 12" fill="none" stroke="#e4e7e7" strokeWidth="3">
              <path d="M1.500 1.500L9 9l7.500-7.500" />
            </svg>
          </TabSearch>
        </TabStrip>

        <ToolbarBack>
          <Toolbar>
            <ToolbarIcon $w={24} $gap={48}>
              <svg width="24" height="24" viewBox="0 0 24 24" fill="none" stroke="#c0c6c7" strokeWidth="2.700">
                <path d="M24 12H2.500M13 1.200L2 12l11 10.800" />
              </svg>
            </ToolbarIcon>
            <ToolbarIcon $w={24} $gap={47}>
              <svg width="24" height="24" viewBox="0 0 24 24" fill="none" stroke="#727879" strokeWidth="2.700">
                <path d="M0 12h21.500M11 1.200L22 12 11 22.800" />
              </svg>
            </ToolbarIcon>
            <ToolbarIcon $w={26} $gap={39}>
              <svg width="26" height="26" viewBox="0 0 26 26" fill="none" stroke="#c0c6c7" strokeWidth="2.700">
                <path d="M22.500 7.500A11 11 0 1 0 24 14.500" />
                <path d="M24 1v9h-9" />
              </svg>
            </ToolbarIcon>
            <Omnibox>
              <SiteChip>
                <svg width="24" height="24" viewBox="0 0 24 24" fill="none" stroke="#e4e6e6" strokeWidth="2.600">
                  <circle cx="5" cy="5.500" r="3.600" />
                  <path d="M12 5.500h12M0 18.500h12" />
                  <circle cx="19" cy="18.500" r="3.600" />
                </svg>
              </SiteChip>
              <Url>
                <UrlHost>checkout.stripe.com</UrlHost>
                /c/pay/cs_test_a1fI0PLtQXMLqbFomCYcplDZp4Q22L8mrewWm1NdqytFseH4nXNIme9OpR#fidkdWxOYHwnPyd1blpxYHZxWjA0VGl0UU9BazBfMm...
              </Url>
              <ToolbarIcon $w={62} $gap={0}><MdStarBorder size={36} /></ToolbarIcon>
            </Omnibox>
            <ToolbarIcon $w={34} $gap={34}><MdQueueMusic size={38} /></ToolbarIcon>
            <Avatar>U</Avatar>
            <ToolbarIcon $w={8} $gap={0}>
              <svg width="8" height="28" viewBox="0 0 8 28" fill="#c0c6c7">
                <circle cx="4" cy="3.200" r="3.200" />
                <circle cx="4" cy="14" r="3.200" />
                <circle cx="4" cy="24.800" r="3.200" />
              </svg>
            </ToolbarIcon>
          </Toolbar>
        </ToolbarBack>

        <Page>
          <SummaryPane>
            <MerchantRow>
              <svg width="24" height="22" viewBox="0 0 24 22" fill="none" stroke="#adadad" strokeWidth="2.800" strokeLinecap="round" strokeLinejoin="round">
                <path d="M22.500 11H1.800M11 1.500L1.500 11l9.500 9.500" />
              </svg>
              <StoreBadge>
                <svg width="24" height="24" viewBox="0 0 24 24" fill="#8c8c8c">
                  <path d="M3 0h18l3 4v1.500a3 3 0 0 1-5 2.500 3.500 3.500 0 0 1-4.700 0 3.500 3.500 0 0 1-4.600 0A3.500 3.500 0 0 1 5 8a3 3 0 0 1-5-2.500V4z" />
                  <path d="M1.200 11h2v7h17.600v-7h2v11a2 2 0 0 1-2 2H3.200a2 2 0 0 1-2-2z" />
                </svg>
              </StoreBadge>
              <TestMode>TEST MODE</TestMode>
            </MerchantRow>
            <ProductName>Modern Leather Sofa</ProductName>
            <Price>US$999.00</Price>
          </SummaryPane>

          <PaymentPane>
            <LinkCard>
              <CardRow $h={130} $lift={3}>
                <svg width="40" height="40" viewBox="0 0 40 40">
                  <circle cx="20" cy="20" r="20" fill="#60d67c" />
                  <path d="M13.200 8h6.600c1.200 5 4.400 9 9.400 11v2.200c-5 2-8.200 6-9.400 11h-6.600c1-5 3.700-9.400 8-12.100C16.900 17.400 14.200 13 13.200 8z" fill="#1f3544" />
                </svg>
                <LinkWordmark>link</LinkWordmark>
                <svg width="33" height="9" viewBox="0 0 33 9" fill="#6d7688">
                  <circle cx="4.200" cy="4.500" r="4" />
                  <circle cx="16.500" cy="4.500" r="4" />
                  <circle cx="28.800" cy="4.500" r="4" />
                </svg>
              </CardRow>
              <CardRow $h={128} $shift={3}>
                <RowLabel>Email</RowLabel>
                <RowValue>imusmanraza@gmail.com</RowValue>
              </CardRow>
              <CardRow $h={166} $shift={4}>
                <RowLabel>Pay with</RowLabel>
                <VisaCard><SiVisa width={55} height={18} viewBox="0 8.1 24 7.8" size={55} /></VisaCard>
                <CardDetails>
                  <RowValue>Visa Credit</RowValue>
                  <CardNumber>
                    <MaskDots><MaskDot /><MaskDot /><MaskDot /><MaskDot /></MaskDots>
                    4242
                  </CardNumber>
                </CardDetails>
                <ChevronSlot>
                  <svg width="32" height="18" viewBox="0 0 32 18" fill="none" stroke="#b4b9c4" strokeWidth="3.200" strokeLinecap="round" strokeLinejoin="round">
                    <path d="M3 2l13 13.500L29 2" />
                  </svg>
                </ChevronSlot>
              </CardRow>
            </LinkCard>
            <PayButton>
              <PayLabel>Pay</PayLabel>
              <LockSlot>
                <svg width="26" height="32" viewBox="0 0 26 32">
                  <path d="M5 15V9.500a8 8 0 0 1 16 0V15" fill="none" stroke="#061a10" strokeWidth="3.400" />
                  <rect y="14" width="26" height="18" rx="3" fill="#061a10" />
                  <rect x="11" y="19" width="4" height="8" rx="2" fill="#88eda1" />
                </svg>
              </LockSlot>
            </PayButton>
            <AltLink>Pay without Link</AltLink>
            <Footer>
              <FooterBrand>
                Powered by
                <FaStripe size={66} height={27} viewBox="0 127 640 259" color="#a3a3a3" />
              </FooterBrand>
              <FooterLink>Terms</FooterLink>
              <FooterLink>Privacy</FooterLink>
            </Footer>
          </PaymentPane>
        </Page>
      </BrowserWindow>

      <DockArea>
        <Dock>
          <DockItem $running><FinderFace id="finder" /></DockItem>
          <DockItem><Launchpad /></DockItem>
          <DockItem $running><ChromeIcon /></DockItem>
          <DockItem><MailIcon /></DockItem>
          <DockItem><MapsIcon /></DockItem>
          <DockItem><PhotosIcon /></DockItem>
          <DockItem><FaceTimeIcon /></DockItem>
          <DockItem><CalendarIcon /></DockItem>
          <DockItem><ContactsIcon /></DockItem>
          <DockItem><RemindersIcon /></DockItem>
          <DockItem $running><NotesIcon /></DockItem>
          <DockItem><FreeformIcon /></DockItem>
          <DockItem $running><MusicIcon /></DockItem>
          <DockItem><PodcastsIcon /></DockItem>
          <DockItem><KeynoteIcon /></DockItem>
          <DockItem><NumbersIcon /></DockItem>
          <DockItem><PagesIcon /></DockItem>
          <DockItem><AppStoreIcon /></DockItem>
          <DockItem $gap={36}><SettingsIcon /></DockItem>
          <DockDivider $gap={33} />
          <DockItem $running><VSCodeIcon /></DockItem>
          <DockItem $running><CursorIcon /></DockItem>
          <DockItem $running><LeafIcon /></DockItem>
          <DockItem $running $top={10}><XcodeIcon /></DockItem>
          <DockItem $gap={36}><PreviewIcon /></DockItem>
          <DockDivider $gap={29} />
          <DockItem $w={84} $gap={27} $top={33}><MinimizedWindow /></DockItem>
          <DockItem $w={66} $gap={0} $top={9}><TrashIcon /></DockItem>
        </Dock>
      </DockArea>
    </Desktop>
  );
}
